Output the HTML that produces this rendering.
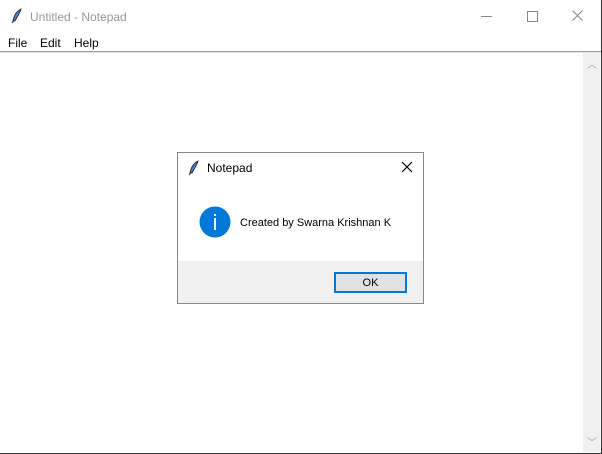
<!DOCTYPE html>
<html><head><style>
body{margin:0;width:602px;height:454px;position:relative;background:#fff;font-family:"Liberation Sans",sans-serif;overflow:hidden}
.a{position:absolute}
</style></head><body>
<div class="a" style="left:0;top:0;width:601px;height:453px;border-right:1px solid #333;border-bottom:1px solid #333;background:#fff"></div>
<svg class="a" style="left:11px;top:8px" width="12" height="16" viewBox="0 0 12 16"><path d="M10 1 C6 3 3 7 2 13 L4 13 C6 9 9 5 10 1Z" fill="#4a7fd0" stroke="#222" stroke-width="0.8"/><path d="M3 12 L1 15" stroke="#222"/></svg>
<div class="a" style="left:30px;top:10px;font-size:12px;color:#999">Untitled - Notepad</div>
<div class="a" style="left:481px;top:16px;width:11px;height:1px;background:#888"></div>
<div class="a" style="left:527px;top:11px;width:9px;height:9px;border:1px solid #888"></div>
<svg class="a" style="left:572px;top:10px" width="11" height="11"><path d="M0.5 0.5L10.5 10.5M10.5 0.5L0.5 10.5" stroke="#888" stroke-width="1"/></svg>
<div class="a" style="left:8px;top:36px;font-size:12px;color:#000">File</div>
<div class="a" style="left:40px;top:36px;font-size:12px;color:#000">Edit</div>
<div class="a" style="left:74px;top:36px;font-size:12px;color:#000">Help</div>
<div class="a" style="left:0;top:51px;width:601px;height:1px;background:#a0a0a0"></div>
<div class="a" style="left:0;top:52px;width:601px;height:1px;background:#e3e3e3"></div>
<div class="a" style="left:583px;top:53px;width:17px;height:399px;background:#f0f0f0"></div>
<div class="a" style="left:587px;top:56px;font-size:10px;color:#a0a0a0">︿</div>
<div class="a" style="left:587px;top:434px;font-size:10px;color:#a0a0a0">﹀</div>
<div class="a" style="left:177px;top:152px;width:245px;height:150px;border:1px solid #888;background:#fff"></div>
<div class="a" style="left:178px;top:261px;width:245px;height:42px;background:#f0f0f0"></div>
<svg class="a" style="left:188px;top:160px" width="12" height="16" viewBox="0 0 12 16"><path d="M10 1 C6 3 3 7 2 13 L4 13 C6 9 9 5 10 1Z" fill="#4a7fd0" stroke="#222" stroke-width="0.8"/><path d="M3 12 L1 15" stroke="#222"/></svg>
<div class="a" style="left:207px;top:161px;font-size:12px;color:#000">Notepad</div>
<svg class="a" style="left:401px;top:161px" width="12" height="12"><path d="M1 1L11 11M11 1L1 11" stroke="#000" stroke-width="1.2"/></svg>
<svg class="a" style="left:199px;top:206px" width="32" height="32"><circle cx="16" cy="16" r="15.5" fill="#0078d7"/><rect x="15" y="8" width="2" height="2" fill="#fff"/><rect x="15" y="12" width="2" height="12" fill="#fff"/></svg>
<div class="a" style="left:240px;top:217px;font-size:11px;color:#000">Created by Swarna Krishnan K</div>
<div class="a" style="left:334px;top:272px;width:69px;height:17px;border:2px solid #0078d7;background:#e1e1e1;font-size:11px;text-align:center;line-height:19px">OK</div>
</body></html>
